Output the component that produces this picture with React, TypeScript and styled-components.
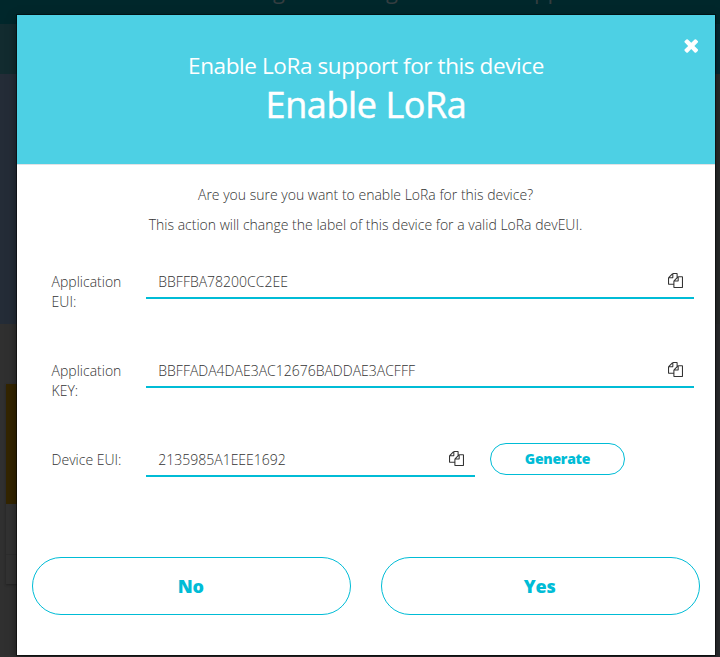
import React from "react";
import styled, { createGlobalStyle } from "styled-components";

const GlobalStyle = createGlobalStyle`
  *, *::before, *::after { box-sizing: border-box; }
  html, body { margin: 0; padding: 0; overflow: hidden; background: #303030; }
  button { font-family: inherit; cursor: pointer; }
`;

const Screen = styled.main`
  position: relative;
  width: 720px;
  height: 657px;
  overflow: hidden;
  font-family: "Open Sans", sans-serif;
  font-weight: 300;
  font-size: 14px;
  color: #333;
`;

const Backdrop = styled.div`
  display: grid;
  grid-template-columns: 360px 360px;
  grid-template-rows: 24px 633px;
  height: 100%;
`;

const TopBar = styled.div`
  grid-column: 1 / 3;
  display: flex;
  padding-left: 273px;
  overflow: hidden;
  background: #00272b;
  color: #343d40;
  font-size: 22px;
  font-weight: 400;
  line-height: 30px;
`;

const TopBarText = styled.span<{ $width: number }>`
  width: ${({ $width }) => $width}px;
  margin-top: -25px;
`;

const Column = styled.div`
  display: flex;
  flex-direction: column;
`;

const Band = styled.div<{ $height: number; $color: string }>`
  height: ${({ $height }) => $height}px;
  flex: none;
  background: ${({ $color }) => $color};
`;

const Card = styled.div`
  margin-left: 6px;
  height: 200px;
  flex: none;
  background: #323232;
  box-shadow: 0 1px 2px #222;
`;

const CardHead = styled.div`
  height: 120px;
  background: #332500;
`;

const CardRow = styled.div`
  height: 51px;
  border-bottom: 1px solid #2d2d2d;
`;

const Modal = styled.section`
  position: absolute;
  top: 15px;
  left: 17px;
  width: 698px;
  height: 640px;
  background: #fff;
  box-shadow: 0 0 0 1px rgba(0, 0, 0, 0.45), 0 3px 9px rgba(0, 0, 0, 0.5);
`;

const Header = styled.header`
  height: 150px;
  padding-top: 34px;
  background: #4dd0e4;
  border-bottom: 1px solid #e2e2e5;
  color: #fff;
  text-align: center;
`;

const Subtitle = styled.p`
  margin: 0;
  font-size: 22.5px;
  font-weight: 400;
  line-height: 34px;
  letter-spacing: -0.4px;
`;

const Title = styled.h1`
  margin: 0;
  font-size: 36px;
  font-weight: 400;
  line-height: 44px;
  letter-spacing: -0.42px;
  -webkit-text-stroke: 0.5px #fff;
`;

const CloseButton = styled.button`
  position: absolute;
  top: 20px;
  right: 13.5px;
  display: flex;
  padding: 0;
  border: 0;
  background: none;
  color: #fff;
`;

const Message = styled.div`
  padding: 15px 1px 0 0;
  text-align: center;

  p {
    margin: 0;
    line-height: 30px;
  }
`;

const Form = styled.div`
  padding: 27px 21px 0 34px;
`;

const FieldRow = styled.div`
  display: grid;
  grid-template-columns: 95px 1fr;
  height: 89px;
`;

const Label = styled.label`
  width: 85px;
  padding: 5px 0 0 0.6px;
  line-height: 20px;
`;

const Controls = styled.div`
  display: flex;
  align-items: flex-start;
  gap: 15px;
`;

const Field = styled.div<{ $width: number }>`
  display: flex;
  align-items: center;
  justify-content: space-between;
  width: ${({ $width }) => $width}px;
  height: 32px;
  padding: 0 11px 2px 12.3px;
  border-bottom: 2px solid #00bcd6;
`;

const OutlineButton = styled.button`
  border: 1px solid #00bcd6;
  border-radius: 29px;
  background: #fff;
  color: #00bcd6;
  font-weight: 800;
  padding: 0;
`;

const GenerateButton = styled(OutlineButton)`
  width: 135px;
  height: 32px;
  margin-top: -2px;
  padding-bottom: 2px;
  font-size: 14px;
  letter-spacing: -0.25px;
`;

const Footer = styled.footer`
  display: grid;
  grid-template-columns: 1fr 1fr;
  gap: 30px;
  padding: 23px 15px 0;
`;

const ChoiceButton = styled(OutlineButton)`
  height: 58px;
  padding-right: 1.5px;
  font-size: 18px;
  letter-spacing: -0.2px;
`;

const CopyIcon = () => (
  <svg width="15" height="16" viewBox="0 60 1792 1792" fill="currentColor" aria-hidden="true">
    <path d="M1696 384q40 0 68 28t28 68v1216q0 40-28 68t-68 28h-960q-40 0-68-28t-28-68v-288h-544q-40 0-68-28t-28-68v-672q0-40 20-88t48-76l408-408q28-28 76-48t88-20h416q40 0 68 28t28 68v328q68-40 128-40h416zm-544 213l-299 299h299v-299zm-640-384l-299 299h299v-299zm196 647l316-316v-416h-384v416q0 40-28 68t-68 28h-416v640h512v-256q0-40 20-88t48-76zm956 804v-1152h-384v416q0 40-28 68t-68 28h-416v640h896z" />
  </svg>
);

const CloseIcon = () => (
  <svg width="20.5" height="20.5" viewBox="0 0 1792 1792" fill="currentColor" aria-hidden="true">
    <path d="M1490 1322q0 40-28 68l-136 136q-28 28-68 28t-68-28l-294-294-294 294q-28 28-68 28t-68-28l-136-136q-28-28-28-68t28-68l294-294-294-294q-28-28-28-68t28-68l136-136q28-28 68-28t68 28l294 294 294-294q28-28 68-28t68 28l136 136q28 28 28 68t-28 68l-294 294 294 294q28 28 28 68z" />
  </svg>
);

const fields = [
  { label: "Application EUI:", value: "BBFFBA78200CC2EE", width: 548 },
  { label: "Application KEY:", value: "BBFFADA4DAE3AC12676BADDAE3ACFFF", width: 548 },
  { label: "Device EUI:", value: "2135985A1EEE1692", width: 329, generate: true },
];

export default function App() {
  return (
    <Screen>
      <GlobalStyle />
      <Backdrop>
        <TopBar>
          <TopBarText $width={113}>g</TopBarText>
          <TopBarText $width={148}>g</TopBarText>
          <TopBarText $width={40}>pp</TopBarText>
        </TopBar>
        <Column>
          <Band $height={50} $color="#122b2f" />
          <Band $height={250} $color="#242c37" />
          <Band $height={60} $color="#303030" />
          <Card>
            <CardHead />
            <CardRow />
          </Card>
        </Column>
        <Column>
          <Band $height={50} $color="#062a35" />
          <Band $height={250} $color="#292b2b" />
          <Band $height={333} $color="#2b2c2f" />
        </Column>
      </Backdrop>
      <Modal role="dialog">
        <Header>
          <Subtitle>Enable LoRa support for this device</Subtitle>
          <Title>Enable LoRa</Title>
          <CloseButton aria-label="Close">
            <CloseIcon />
          </CloseButton>
        </Header>
        <Message>
          <p>Are you sure you want to enable LoRa for this device?</p>
          <p>This action will change the label of this device for a valid LoRa devEUI.</p>
        </Message>
        <Form>
          {fields.map((field) => (
            <FieldRow key={field.label}>
              <Label>{field.label}</Label>
              <Controls>
                <Field $width={field.width}>
                  <span>{field.value}</span>
                  <CopyIcon />
                </Field>
                {field.generate && <GenerateButton>Generate</GenerateButton>}
              </Controls>
            </FieldRow>
          ))}
        </Form>
        <Footer>
          <ChoiceButton>No</ChoiceButton>
          <ChoiceButton>Yes</ChoiceButton>
        </Footer>
      </Modal>
    </Screen>
  );
}
